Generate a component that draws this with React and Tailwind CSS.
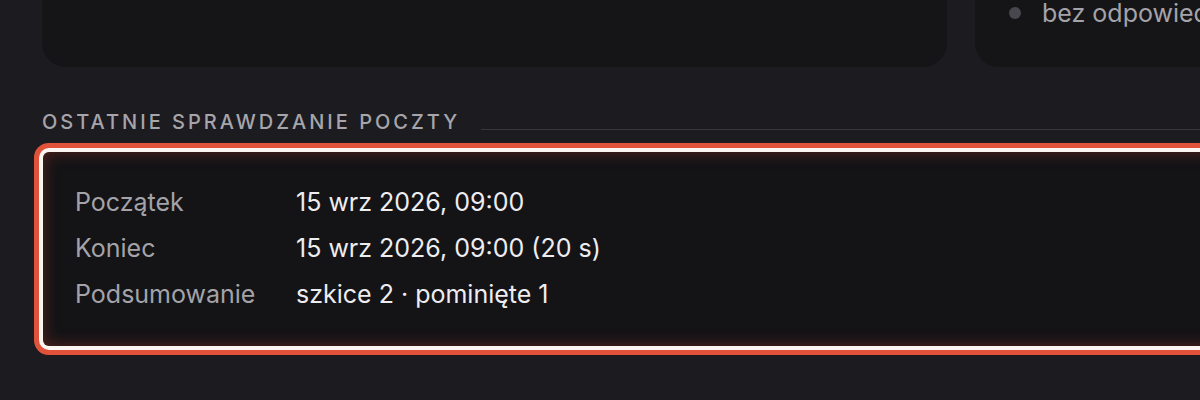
export default function App() {
  const rows = [
    ["Początek", "15 wrz 2026, 09:00"],
    ["Koniec", "15 wrz 2026, 09:00 (20 s)"],
    ["Podsumowanie", "szkice 2 · pominięte 1"],
  ];
  return (
    <div
      className="w-[1200px] h-[400px] overflow-hidden bg-[#1c1b20]"
      style={{ fontFamily: "Inter, 'Noto Sans', sans-serif" }}
    >
      <div className="w-[1400px] pl-[42px]">
        <div className="grid grid-cols-[905px_1fr] gap-[28px] h-[67px]">
          <div className="bg-[#151417] rounded-b-[24px]" />
          <div className="bg-[#151417] rounded-b-[24px] pl-[34px]">
            <div className="flex items-center gap-[21px] h-[26px]">
              <span className="w-[12px] h-[12px] rounded-full bg-[#48474d]" />
              <span className="text-[25px] leading-none text-[#a3a3a9] whitespace-nowrap">bez odpowiedzi</span>
            </div>
          </div>
        </div>

        <div className="flex items-center gap-[21px] mt-[42px] h-[26px]">
          <h2 className="text-[20px] tracking-[0.15em] font-medium text-[#a6a5ab] leading-[26px] whitespace-nowrap">
            OSTATNIE SPRAWDZANIE POCZTY
          </h2>
          <div className="flex-1 h-px bg-[#38373e] mt-[14px]" />
        </div>

        <div className="mt-[17px] ml-px w-[1300px] rounded-md bg-[#141316] pl-[32px] py-[28px] shadow-[0_0_0_4px_#fbf5f2,0_0_0_9px_#e0523a,inset_0_0_16px_rgba(190,60,40,0.4)]">
          {rows.map(([k, v]) => (
            <div key={k} className="flex h-[46px] items-center text-[25px]">
              <span className="w-[221px] text-[#a3a3a9]">{k}</span>
              <span className="text-[#ededf0]">{v}</span>
            </div>
          ))}
        </div>
      </div>
    </div>
  );
}
